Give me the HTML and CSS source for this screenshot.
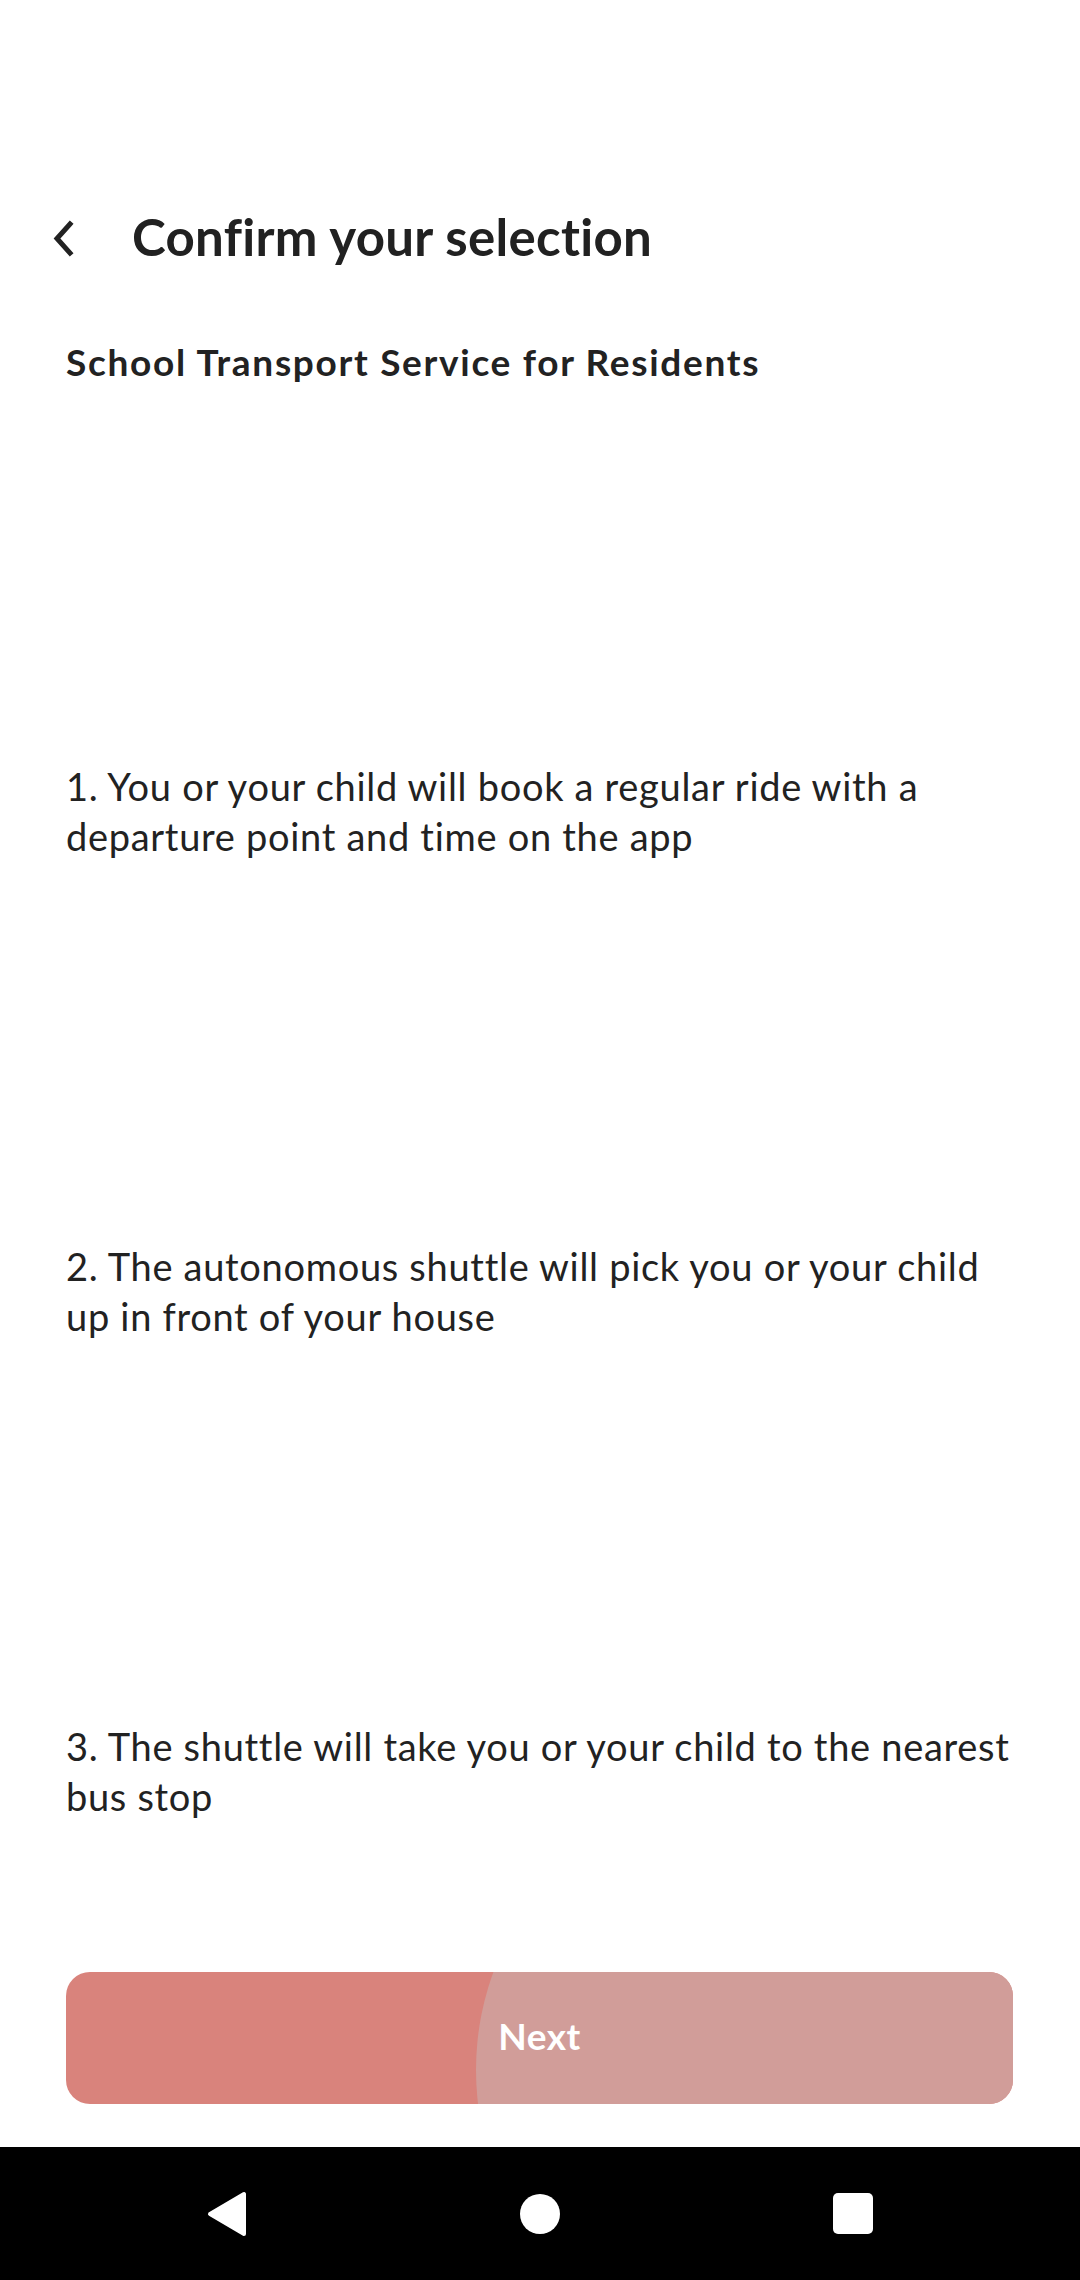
FILE: index.html
```html
<!DOCTYPE html>
<html lang="en">
<head>
<meta charset="utf-8">
<title>Confirm your selection</title>
<link rel="stylesheet" href="styles.css">
</head>
<body>
<div class="screen">
  <div class="status-space"></div>
  <header class="header">
    <button class="back" aria-label="Back">
      <svg width="30" height="40" viewBox="0 0 30 40"><path d="M18 5 L5 19.5 L18 34" fill="none" stroke="#222" stroke-width="5" stroke-linecap="square" stroke-linejoin="miter"/></svg>
    </button>
    <h1 class="title">Confirm your selection</h1>
  </header>
  <main class="content">
    <h2 class="subtitle">School Transport Service for Residents</h2>
    <ol class="steps">
      <li class="step step-1">
        <div class="illus"></div>
        <p class="step-text">1. You or your child will book a regular ride with a<br>departure point and time on the app</p>
      </li>
      <li class="step">
        <div class="illus"></div>
        <p class="step-text">2. The autonomous shuttle will pick you or your child<br>up in front of your house</p>
      </li>
      <li class="step">
        <div class="illus"></div>
        <p class="step-text">3. The shuttle will take you or your child to the nearest<br>bus stop</p>
      </li>
    </ol>
  </main>
  <div class="footer">
    <button class="next">
      <span class="ripple"></span>
      <span class="next-label">Next</span>
    </button>
  </div>
  <nav class="navbar">
    <div class="nav-slot">
      <svg width="44" height="50" viewBox="0 0 44 50"><path d="M5 25 L39 5 L39 45 Z" fill="#fff" stroke="#fff" stroke-width="4" stroke-linejoin="round"/></svg>
    </div>
    <div class="nav-slot"><span class="home-dot"></span></div>
    <div class="nav-slot"><span class="recent-sq"></span></div>
  </nav>
</div>
</body>
</html>
```
FILE: styles.css
```css
* { box-sizing: border-box; }
html, body { margin: 0; padding: 0; background: #fff; }
body { font-family: Lato, "Open Sans", sans-serif; color: #222222; }
.screen { width: 1080px; height: 2280px; display: flex; flex-direction: column; overflow: hidden; }
.status-space { height: 177px; flex: none; }
.header { height: 120px; flex: none; display: flex; align-items: center; padding-left: 44px; }
.back { width: 40px; height: 50px; border: 0; background: none; padding: 0; margin: 0 48px 0 0; display: flex; align-items: center; justify-content: center; }
.back svg { display: block; margin-left: 6px; margin-top: 4px; }
.title { margin: 0; font-size: 51px; line-height: 60px; font-weight: 700; color: #212121; letter-spacing: 0.3px; }
.content { padding: 0 66px; flex: 1; }
.subtitle { margin: 40px 0 0; font-size: 37px; line-height: 50px; font-weight: 700; color: #222; letter-spacing: 1.7px; }
.steps { list-style: none; margin: 0; padding: 0; display: flex; flex-direction: column; }
.step { display: flex; flex-direction: column; }
.illus { height: 380px; }
.step-1 .illus { height: 374px; }
.step-text { margin: 0; font-size: 38px; line-height: 50px; font-weight: 400; color: #222; white-space: nowrap; letter-spacing: 0.7px; }
.footer { padding: 0 67px 43px 66px; flex: none; }
.next { position: relative; overflow: hidden; width: 100%; height: 132px; border: 0; border-radius: 24px; background: #d9837c; display: flex; align-items: center; justify-content: center; padding: 0 0 6px; font-family: inherit; }
.ripple { position: absolute; left: 410px; top: -186px; width: 568px; height: 568px; border-radius: 50%; background: #d19d99; }
.next-label { position: relative; color: #fff; font-size: 37px; font-weight: 700; letter-spacing: 0.5px; }
.navbar { height: 133px; flex: none; background: #000; display: flex; justify-content: center; align-items: center; gap: 193px; }
.nav-slot { width: 120px; height: 60px; display: flex; align-items: center; justify-content: center; }
.nav-slot svg { display: block; }
.home-dot { width: 40px; height: 40px; border-radius: 50%; background: #fff; display: block; }
.recent-sq { width: 40px; height: 41px; border-radius: 5px; background: #fff; display: block; }
```
